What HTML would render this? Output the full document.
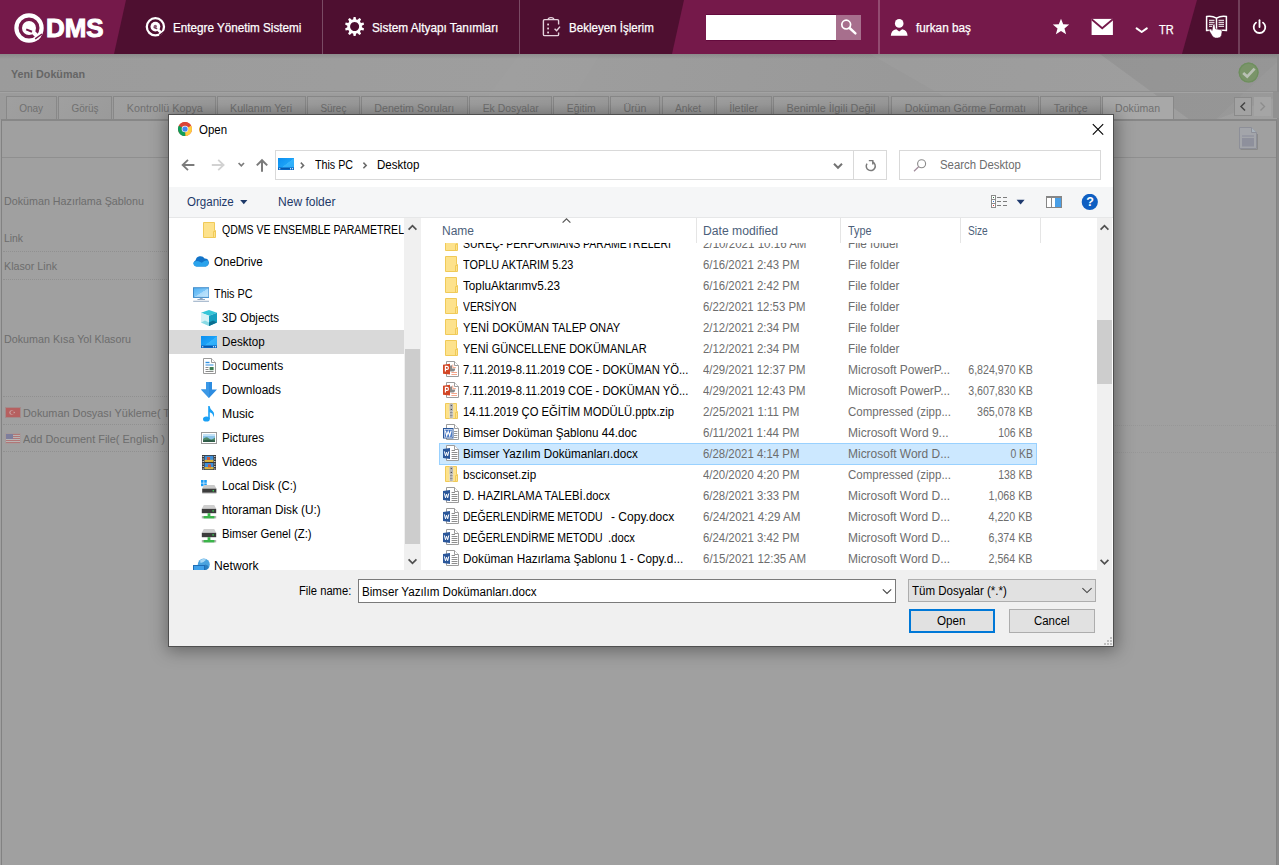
<!DOCTYPE html>
<html><head>
<meta charset="utf-8">
<title>QDMS</title>
<style>
*{box-sizing:border-box;margin:0;padding:0}
html,body{width:1279px;height:865px;overflow:hidden}
body{position:relative;background:#a0a0a0;font-family:"Liberation Sans",sans-serif;font-size:12px;color:#000}
.abs{position:absolute}
.t{position:absolute;white-space:nowrap;line-height:16px;height:16px;transform-origin:0 50%}
/* header */
#hdr{position:absolute;left:0;top:0;width:1279px;height:54px;background:#4e0f30;overflow:hidden}
#hdr .lt{position:absolute;top:0;height:54px;background:#75194a}
#hdr .sep{position:absolute;top:0;width:1px;height:54px;background:rgba(255,255,255,.25)}
#hdr .ht{position:absolute;color:#fff;font-size:12.5px;-webkit-text-stroke:.25px #fff;white-space:nowrap;line-height:16px;transform-origin:0 50%}
/* page */
.pgt{position:absolute;color:#6d6d6d;font-size:11px;margin-top:.4px;white-space:nowrap;line-height:14px;transform-origin:0 50%}
.tab{position:absolute;top:96px;height:23px;border:1px solid #888;border-bottom:none;background:linear-gradient(135deg,#a0a0a0,#9a9a9a);color:#707070;font-size:11px;line-height:22px;text-align:center;white-space:nowrap}
/* dialog */
#dlg{position:absolute;left:168px;top:114px;width:946px;height:533px;background:#fff;border:1px solid #4f4f4f;box-shadow:1px 2px 16px 2px rgba(0,0,0,.36)}
#dlg .t{font-size:12px}
</style>
</head>
<body>
<svg width="0" height="0" style="position:absolute">
<defs>
<linearGradient id="dg2" x1="0" y1="0" x2="1" y2="1"><stop offset="0" stop-color="#0c8ff0"></stop><stop offset=".5" stop-color="#1ba1f7"></stop><stop offset=".52" stop-color="#35b3fb"></stop><stop offset="1" stop-color="#29a9f8"></stop></linearGradient>
<linearGradient id="mg" x1="0" y1="0" x2="1" y2="1"><stop offset="0" stop-color="#4fb0f3"></stop><stop offset=".5" stop-color="#7cc6f8"></stop><stop offset=".52" stop-color="#a9dafb"></stop><stop offset="1" stop-color="#c6e7fc"></stop></linearGradient>
<symbol id="i-folder" viewBox="0 0 16 16"><path d="M2.5 .5 H13.5 V8.5 H14.5 V15.5 H2.5Z" fill="#fde28c" stroke="#f0ca58" stroke-width="1"></path><path d="M12.5 15 V9.5 H14" fill="none" stroke="#f0ca58" stroke-width="1"></path></symbol>
<symbol id="i-zip" viewBox="0 0 16 16"><path d="M2.5 .5 H13.5 V8.5 H14.5 V15.5 H2.5Z" fill="#fde28c" stroke="#f0ca58" stroke-width="1"></path><path d="M12.5 15 V9.5 H14" fill="none" stroke="#f0ca58" stroke-width="1"></path><rect x="6.4" y=".5" width="3.8" height="15" fill="#dcdcdc"></rect><rect x="7.1" y=".8" width="2.4" height="7.6" rx=".8" fill="#bdbdbd" stroke="#9a9a9a" stroke-width=".5"></rect><circle cx="8.3" cy="2.6" r=".6" fill="#333"></circle><circle cx="8.3" cy="6.4" r=".6" fill="#333"></circle><path d="M7 9.5h2.6M7 11h2.6M7 12.5h2.6M7 14h2.6" stroke="#6e6e6e" stroke-width=".7"></path></symbol>
<symbol id="i-ppt" viewBox="0 0 16 16"><path d="M3.5 .5 H11.5 L15.5 4.5 V15.5 H3.5Z" fill="#fff" stroke="#9c9c9c" stroke-width="1"></path><path d="M11.5 .5 V4.5 H15.5" fill="#fff" stroke="#9c9c9c" stroke-width="1"></path><path d="M9 4.2 V7.4 H12.2 A3.2 3.2 0 1 1 9 4.2Z" fill="#8a8a8a"></path><path d="M9.8 3.6 V6.6 H12.8" fill="none" stroke="#f4a58a" stroke-width="1"></path><rect x="8.4" y="11" width="5.6" height="1" fill="#f4a58a"></rect><rect x="8.4" y="13" width="5.6" height="1" fill="#f4a58a"></rect><path d="M0 3.8 L7 2.8 V13.6 L0 12.8Z" fill="#d24625"></path><path d="M2.4 10.6 V5.4 H4 Q5.4 5.4 5.4 6.9 Q5.4 8.4 4 8.4 H2.4" fill="none" stroke="#fff" stroke-width="1.2"></path></symbol>
<symbol id="i-doc" viewBox="0 0 16 16"><path d="M3.5 .5 H11.5 L15.5 4.5 V15.5 H3.5Z" fill="#fff" stroke="#9c9c9c" stroke-width="1"></path><path d="M11.5 .5 V4.5 H15.5" fill="#fff" stroke="#9c9c9c" stroke-width="1"></path><path d="M11 7.5h3.4M11 9.5h3.4M11 11.5h3.4M11 13.5h3.4" stroke="#9a9a9a" stroke-width="1"></path><rect x=".5" y="4.5" width="9.5" height="9.5" fill="#fff" stroke="#2b579a" stroke-width="1"></rect><rect x="1.6" y="5.6" width="7.3" height="7.3" fill="#3f6fbf"></rect><path d="M2.4 6.6 L3.7 11.8 L5.2 7.6 L6.7 11.8 L8.1 6.6" fill="none" stroke="#fff" stroke-width="1.2"></path></symbol>
<symbol id="i-docx" viewBox="0 0 16 16"><path d="M3.5 .5 H11.5 L15.5 4.5 V15.5 H3.5Z" fill="#fff" stroke="#9c9c9c" stroke-width="1"></path><path d="M11.5 .5 V4.5 H15.5" fill="#fff" stroke="#9c9c9c" stroke-width="1"></path><path d="M8.6 5.5h3.4M8.6 7.5h5.8M8.6 9.5h5.8M8.6 11.5h5.8M8.6 13.5h5.8" stroke="#8e8e8e" stroke-width="1"></path><path d="M0 4 L7 3 V14 L0 13Z" fill="#2b579a"></path><path d="M1.4 6.4 L2.5 10.8 L3.6 7.2 L4.7 10.8 L5.8 6.4" fill="none" stroke="#fff" stroke-width="1"></path></symbol>
<symbol id="i-desk" viewBox="0 0 16 12"><rect width="16" height="12" fill="url(#dg2)"></rect><rect y="9.4" width="16" height="2.6" fill="#0867c4"></rect><rect x="1.2" y="10.2" width="1.1" height="1.1" fill="#f0f8ff"></rect><rect x="12" y="10.2" width="1.1" height="1.1" fill="#f0f8ff"></rect><rect x="14" y="10.2" width="1.1" height="1.1" fill="#f0f8ff"></rect><rect x="2.6" y="10.4" width="9" height=".6" fill="#0a4f9e"></rect></symbol>
<symbol id="i-cloud" viewBox="0 0 17 11"><path d="M3.6 10.6 A3.4 3.4 0 0 1 2.6 4.2 A4.9 4.9 0 0 1 11.6 2.6 A4.1 4.1 0 0 1 13 10.6Z" fill="#1173c8"></path><path d="M3.6 10.6 A3.4 3.4 0 0 1 .4 6.4 Q2.6 4.2 5.6 5.2 L8.8 6.8 Q11 4.4 14.4 4.2 A4.1 4.1 0 0 1 13 10.6Z" fill="#2aa3ec"></path></symbol>
<symbol id="i-pc" viewBox="0 0 17 15"><rect x=".5" y=".5" width="16" height="10" fill="url(#mg)" stroke="#3a87c8" stroke-width="1"></rect><rect x="7" y="11" width="3" height="1.6" fill="#8fa7c0"></rect><rect x="4.6" y="12.2" width="7.8" height="1" fill="#8fa7c0"></rect><rect x=".2" y="14" width="16.6" height="1" fill="#8fa7c0"></rect></symbol>
<symbol id="i-3d" viewBox="0 0 16 16"><path d="M8 0 L16 2.8 L8 5.8 L0 2.8Z" fill="#35c6d8"></path><path d="M0 2.8 L8 5.8 V16 L0 12.6Z" fill="#d5f2f6"></path><path d="M16 2.8 L8 5.8 V16 L16 12.6Z" fill="#169fc0"></path><path d="M0 12.6 L4 10.6 L8 12.4 V16Z" fill="#8adbe5"></path><path d="M16 12.6 L12 10.6 L8 12.4 V16Z" fill="#0b6f90"></path></symbol>
<symbol id="i-docs" viewBox="0 0 13 16"><path d="M.5 .5 H8.5 L12.5 4.5 V15.5 H.5Z" fill="#fff" stroke="#9a9a9a" stroke-width="1"></path><path d="M8.5 .5 V4.5 H12.5" fill="#fff" stroke="#9a9a9a" stroke-width="1"></path><path d="M2.5 4.5h4" stroke="#2f8ee0" stroke-width="1.4"></path><path d="M2.5 7h8" stroke="#2f8ee0" stroke-width="1"></path><path d="M2.5 9.5h3M2.5 11.5h3M2.5 13.5h8" stroke="#8a8a8a" stroke-width="1"></path><rect x="6.6" y="9" width="4" height="3.2" fill="#3d7d54"></rect></symbol>
<symbol id="i-down" viewBox="0 0 16 16"><path d="M5 0 H11 V7.4 H16 L8 16 L0 7.4 H5Z" fill="#2d8ce0"></path><path d="M5 0 H8 V16 L0 7.4 H5Z" fill="#3b98e6"></path></symbol>
<symbol id="i-music" viewBox="0 0 12 16"><ellipse cx="3.4" cy="13" rx="3.4" ry="2.6" fill="#1aa0f5"></ellipse><path d="M5.2 13 V0 H6.6 Q7 3 9.6 5 Q12.4 7.6 10 11.4 Q10.8 7.6 6.8 6.2 V13Z" fill="#1aa0f5"></path></symbol>
<symbol id="i-pics" viewBox="0 0 16 12"><rect x=".5" y=".5" width="15" height="11" fill="#fff" stroke="#9a9a9a" stroke-width="1"></rect><rect x="2" y="2" width="12" height="8" fill="#8cc4ea"></rect><path d="M2 7 Q5 4 8 6.4 T14 5.6 V10 H2Z" fill="#4f8a6a"></path><path d="M2 8.6 Q6 7 14 8.4 V10 H2Z" fill="#2e5c47"></path><rect x="2" y="2" width="12" height="2" fill="#c3e2f6"></rect></symbol>
<symbol id="i-vid" viewBox="0 0 14 15"><rect width="14" height="15" fill="#3a3a3a"></rect><rect x="2.6" y=".8" width="8.8" height="6.2" fill="#3f8fd8"></rect><rect x="2.6" y="8" width="8.8" height="6.2" fill="#3f8fd8"></rect><rect x="2.6" y="4.8" width="8.8" height="2.2" fill="#d9b23c"></rect><rect x="2.6" y="12" width="8.8" height="2.2" fill="#d9b23c"></rect><rect x="5" y="2" width="3" height="3" fill="#c85a3c"></rect><rect x="6" y="9.4" width="3" height="3" fill="#c85a3c"></rect><path d="M.6 1.5h1.2M.6 4h1.2M.6 6.5h1.2M.6 9h1.2M.6 11.5h1.2M.6 14h1.2M12.2 1.5h1.2M12.2 4h1.2M12.2 6.5h1.2M12.2 9h1.2M12.2 11.5h1.2M12.2 14h1.2" stroke="#e8e8e8" stroke-width="1.2"></path></symbol>
<symbol id="i-cdrv" viewBox="0 0 16 14"><rect x="0" y="0" width="2.6" height="2.8" fill="#1a9cf5"></rect><rect x="3.2" y="0" width="2.6" height="2.8" fill="#1a9cf5"></rect><rect x="0" y="3.4" width="2.6" height="2.8" fill="#1a9cf5"></rect><rect x="3.2" y="3.4" width="2.6" height="2.8" fill="#1a9cf5"></rect><path d="M3 5 H13.4 L15.4 8.6 H1.2Z" fill="#c9c9c9"></path><rect x="1.2" y="8.6" width="14.2" height="4.2" fill="#3c3c3c"></rect><rect x="1.2" y="12.6" width="14.2" height=".8" fill="#9a9a9a"></rect><rect x="11.6" y="10" width="1.4" height="1.4" fill="#39d353"></rect></symbol>
<symbol id="i-ndrv" viewBox="0 0 16 14"><path d="M2.8 0 H13.2 L15.2 3.8 H.8Z" fill="#cfcfcf"></path><rect x=".8" y="3.8" width="14.4" height="4.4" fill="#3c3c3c"></rect><rect x="11.4" y="5.2" width="1.4" height="1.4" fill="#39d353"></rect><rect x="6.6" y="8.2" width="2.8" height="3" fill="#3bb54a"></rect><rect x=".8" y="11" width="14.4" height="2.4" fill="#b4b4b4"></rect><rect x="2.6" y="11" width="10.8" height="2.4" fill="#3bb54a"></rect></symbol>
<symbol id="i-net" viewBox="0 0 17 13"><circle cx="10.8" cy="6.4" r="6" fill="#4aa3df"></circle><path d="M7 2.4 Q10 0 13.4 1.6 Q11 4.6 7.6 5Z" fill="#a8d8f5"></path><path d="M12 6.4 Q16 7 15.6 10 Q13 12.6 10 12.2Z" fill="#2b7fc0"></path><rect x=".5" y="7.5" width="11" height="6" fill="#3ea0ea" stroke="#1f6db5" stroke-width="1"></rect></symbol>
</defs>
</svg>


<!-- ===== HEADER ===== -->
<div id="hdr">
  <div class="lt" style="left:0;width:126px;clip-path:polygon(0 0,126px 0,114px 54px,0 54px)"></div>
  <div class="lt" style="left:672px;width:526px;clip-path:polygon(12px 0,525px 0,510px 54px,0 54px)"></div>
  <div class="sep" style="left:322px"></div>
  <div class="sep" style="left:519px"></div>
  <div class="sep" style="left:878px;width:2px;background:rgba(255,255,255,.22)"></div>
  <div class="sep" style="left:1238px;width:2px;background:rgba(255,255,255,.2)"></div>
  <svg class="abs" style="left:0;top:0" width="1279" height="54" viewBox="0 0 1279 54">
  <!-- QDMS logo -->
  <circle cx="29" cy="28" r="12.6" fill="none" stroke="#fff" stroke-width="4.2"></circle>
  <circle cx="29" cy="28" r="7" fill="#fff"></circle>
  <path d="M31.5 30.5 L39.5 38.5" stroke="#fff" stroke-width="4" fill="none"></path>
  <path d="M26.2 29.4 L32 31.8" stroke="#75194a" stroke-width="2.1" fill="none"></path>
  <path d="M35.2 38.8 L42 34" stroke="#75194a" stroke-width="1.5" fill="none"></path>
  <!-- Q icon -->
  <circle cx="155.4" cy="26.8" r="8.6" fill="none" stroke="#fff" stroke-width="2.3"></circle>
  <circle cx="155.4" cy="26.6" r="4.9" fill="#fff"></circle>
  <circle cx="155.3" cy="26.4" r="1.7" fill="#8a5a72"></circle>
  <path d="M153.6 27.6 L157.4 29" stroke="#6a3050" stroke-width="1.1" fill="none"></path>
  <path d="M157.4 29 L161.4 33.2" stroke="#fff" stroke-width="2.6" fill="none"></path>
  <path d="M159.2 35.4 L164 31.8" stroke="#4e0f30" stroke-width="1.2" fill="none"></path>
  <!-- gear -->
  <path fill="#fff" fill-rule="evenodd" d="M353.6 16.9 L355.6 16.9 L356.1 19.4 L357.6 19.8 L359.4 18.1 L361.1 19.3 L360.0 21.6 L360.9 22.9 L363.5 22.5 L364.1 24.5 L361.9 25.7 L361.9 27.3 L364.1 28.5 L363.5 30.5 L360.9 30.1 L360.0 31.4 L361.1 33.7 L359.4 34.9 L357.6 33.2 L356.1 33.6 L355.6 36.1 L353.6 36.1 L353.1 33.6 L351.6 33.2 L349.8 34.9 L348.1 33.7 L349.2 31.4 L348.3 30.1 L345.7 30.5 L345.1 28.5 L347.3 27.3 L347.3 25.7 L345.1 24.5 L345.7 22.5 L348.3 22.9 L349.2 21.6 L348.1 19.3 L349.8 18.1 L351.6 19.8 L353.1 19.4Z M354.6 22 a4.5 4.5 0 1 0 0.01 0Z"></path>
  <!-- clipboard -->
  <g fill="none" stroke="#e6d3dd" stroke-width="1.4">
    <path d="M558.6 24.5 V20.8 Q558.6 19.6 557.4 19.6 H544.6 Q543.4 19.6 543.4 20.8 V34.4 Q543.4 35.6 544.6 35.6 H557.4 Q558.6 35.6 558.6 34.4 V32.5"></path>
    <path d="M548.2 19.6 Q548.2 17.6 551 17.6 Q553.8 17.6 553.8 19.6"></path>
    <path d="M554.6 28.8 L556.6 30.8 L560 26.6"></path>
  </g>
  <g fill="#e6d3dd"><rect x="547.2" y="23.6" width="1.8" height="1.8"></rect><rect x="547.2" y="27.6" width="1.8" height="1.8"></rect><rect x="547.2" y="31.6" width="1.8" height="1.8"></rect></g>
  <!-- user -->
  <circle cx="899.2" cy="23.4" r="4.3" fill="#fff"></circle>
  <path fill="#fff" d="M890.8 35.8 Q891.2 30 896.2 29.2 L899.2 31.4 L902.2 29.2 Q907.2 30 907.6 35.8Z"></path>
  <!-- star -->
  <polygon fill="#fff" points="1061.0,18.7 1063.2,24.3 1069.2,24.6 1064.5,28.4 1066.1,34.3 1061.0,31.0 1055.9,34.3 1057.5,28.4 1052.8,24.6 1058.8,24.3"></polygon>
  <!-- mail -->
  <rect x="1091.6" y="18.9" width="21.3" height="16.1" fill="#fff"></rect>
  <path d="M1091.6 19.2 L1102.2 28.2 L1112.9 19.2" fill="none" stroke="#75194a" stroke-width="1.8"></path>
  <!-- chevron -->
  <path d="M1136.6 28.4 L1141.7 32 L1146.8 28.4" fill="none" stroke="#fff" stroke-width="2" stroke-linecap="round" stroke-linejoin="round"></path>
  <!-- book -->
  <g fill="none" stroke="#fff" stroke-width="1.5">
    <path d="M1216.5 18.2 Q1212 15.6 1206.6 16.6 V30.4 Q1212 29.6 1216.5 31.6 Q1221 29.6 1226.4 30.4 V16.6 Q1221 15.6 1216.5 18.2 V31"></path>
  </g>
  <g stroke="#fff" stroke-width="1" fill="none">
    <path d="M1209 20.3h5.5M1209 22.3h5.5M1209 24.3h5.5M1209 26.3h3M1218.5 20.3h5.5M1218.5 22.3h5.5M1218.5 24.3h5.5M1218.5 26.3h5.5"></path>
  </g>
  <path fill="#fff" stroke="#4e0f30" stroke-width=".5" d="M1212.9 24.6 Q1214.4 23.8 1214.9 25.4 L1215.5 28.8 L1220.8 29.8 Q1222.2 30.2 1222 32 L1221.4 35.4 Q1220.6 38 1217.6 38 H1215.4 Q1213.4 37.8 1212.2 35.8 L1209.2 30.8 Q1208.8 29.2 1210.4 29 L1212.2 30.6 Z"></path>
  <!-- power -->
  <path d="M1256 22.6 A5.8 5.8 0 1 0 1263 22.6" fill="none" stroke="#fff" stroke-width="1.8" stroke-linecap="round"></path>
  <path d="M1259.5 20.2 V27" stroke="#fff" stroke-width="1.8" stroke-linecap="round"></path>
</svg>
<div class="ht" style="left: 46.2px; top: 13px; font-size: 25.5px; font-weight: bold; line-height: 30px; -webkit-text-stroke: 1px rgb(255, 255, 255); transform: scaleX(1.0164);">DMS</div>
<div class="ht" style="left: 173px; top: 19.6px; transform: scaleX(0.9342);">Entegre Yönetim Sistemi</div>
<div class="ht" style="left: 371.8px; top: 19.6px; transform: scaleX(0.9443);">Sistem Altyapı Tanımları</div>
<div class="ht" style="left: 568.8px; top: 19.6px; transform: scaleX(0.9247);">Bekleyen İşlerim</div>
<div class="abs" style="left:706px;top:15px;width:130px;height:25px;background:#fff;box-shadow:0 -1px 0 #640a3d,0 1px 0 #640a3d"></div>
<div class="abs" style="left:836px;top:15px;width:25px;height:25px;background:#a76f8d"></div>
<svg class="abs" style="left:836px;top:15px" width="25" height="25" viewBox="836 15 25 25">
  <circle cx="846.2" cy="24.6" r="4.4" fill="none" stroke="#fff" stroke-width="1.7"></circle>
  <path d="M849.6 28 L855.4 33.4" stroke="#fff" stroke-width="2.4" stroke-linecap="round"></path>
</svg>
<div class="ht" style="left: 915.7px; top: 19.6px; transform: scaleX(0.9405);">furkan baş</div>
<div class="ht" style="left: 1159px; top: 21.6px; font-size: 12px; transform: scaleX(0.9187);">TR</div>

</div>

<!-- ===== PAGE (dimmed) ===== -->
<div id="page">
<div class="abs" style="left:0;top:54px;width:1279px;height:66px;background:linear-gradient(100deg,#9b9b9b 0%,#9e9e9e 40%,#999 70%,#9c9c9c 100%)"></div>
<svg class="abs" style="left:0;top:54px" width="1279" height="66" viewBox="0 54 1279 66"><polygon points="870,54 1100,54 1190,120 985,120" fill="rgba(255,255,255,.035)"></polygon><polygon points="1100,54 1279,54 1279,96 1215,120 1190,120" fill="rgba(0,0,0,.035)"></polygon><polygon points="1215,120 1279,60 1279,120" fill="rgba(255,255,255,.035)"></polygon><polygon points="470,120 520,54 600,54 560,120" fill="rgba(255,255,255,.02)"></polygon></svg>
<div class="abs" id="hdrshadow" style="left:0;top:54px;width:1279px;height:5px;background:linear-gradient(rgba(0,0,0,.10),rgba(0,0,0,0))"></div>
<div class="abs" style="left:0;top:91px;width:1279px;height:1px;background:#8f8f8f"></div><div class="abs" style="left:0;top:92px;width:1279px;height:1px;background:#a3a3a3"></div>
<div class="pgt" style="left: 11px; top: 65.2px; font-weight: bold; color: rgb(102, 102, 102); line-height: 16px; transform: scaleX(0.9763);">Yeni Doküman</div>
<div class="tab" style="left:6px;width:51px;"><span style="display: inline-block; transform-origin: 50% 50%; transform: scaleX(0.9127);">Onay</span></div>
<div class="tab" style="left:58px;width:54px;"><span style="display: inline-block; transform-origin: 50% 50%; transform: scaleX(0.9009);">Görüş</span></div>
<div class="tab" style="left:113px;width:103px;"><span style="display: inline-block; transform-origin: 50% 50%; transform: scaleX(0.9785);">Kontrollü Kopya</span></div>
<div class="tab" style="left:217px;width:89px;"><span style="display: inline-block; transform-origin: 50% 50%; transform: scaleX(0.9655);">Kullanım Yeri</span></div>
<div class="tab" style="left:307px;width:53px;"><span style="display: inline-block; transform-origin: 50% 50%; transform: scaleX(0.9043);">Süreç</span></div>
<div class="tab" style="left:361px;width:107px;"><span style="display: inline-block; transform-origin: 50% 50%; transform: scaleX(0.9691);">Denetim Soruları</span></div>
<div class="tab" style="left:469px;width:83px;"><span style="display: inline-block; transform-origin: 50% 50%; transform: scaleX(0.9444);">Ek Dosyalar</span></div>
<div class="tab" style="left:553px;width:56px;"><span style="display: inline-block; transform-origin: 50% 50%; transform: scaleX(0.9489);">Eğitim</span></div>
<div class="tab" style="left:610px;width:50px;"><span style="display: inline-block; transform-origin: 50% 50%; transform: scaleX(0.9646);">Ürün</span></div>
<div class="tab" style="left:662px;width:53px;"><span style="display: inline-block; transform-origin: 50% 50%; transform: scaleX(0.9239);">Anket</span></div>
<div class="tab" style="left:716px;width:56px;"><span style="display: inline-block; transform-origin: 50% 50%; transform: scaleX(0.9883);">İletiler</span></div>
<div class="tab" style="left:773px;width:116px;"><span style="display: inline-block; transform-origin: 50% 50%; transform: scaleX(0.9903);">Benimle İlgili Değil</span></div>
<div class="tab" style="left:891px;width:148px;"><span style="display: inline-block; transform-origin: 50% 50%; transform: scaleX(0.9703);">Doküman Görme Formatı</span></div>
<div class="tab" style="left:1040px;width:61px;"><span style="display: inline-block; transform-origin: 50% 50%; transform: scaleX(0.9586);">Tarihçe</span></div>
<div class="tab" style="left:1102px;width:72px;background:#a8a8a8;height:24px;"><span style="display: inline-block; transform-origin: 50% 50%; transform: scaleX(0.9559);">Doküman</span></div>
<div class="abs" style="left:1234px;top:97px;width:18px;height:19px;border:1px solid #8a8a8a;background:#a3a3a3"></div>
<div class="abs" style="left:1254px;top:97px;width:17px;height:19px;background:#a5a5a5"></div>
<svg class="abs" style="left:1234px;top:97px" width="38" height="19" viewBox="0 0 38 19"><path d="M11 5.5 L7 9.5 L11 13.5" fill="none" stroke="#444" stroke-width="1.5"></path><path d="M26.5 5.5 L30.5 9.5 L26.5 13.5" fill="none" stroke="#8c8c8c" stroke-width="1.3"></path></svg>
<div class="abs" style="left:1px;top:119px;width:1276px;height:746px;border:1px solid #828282;border-top:2px solid #878787;border-bottom:none;background:#a0a0a0"></div>
<div class="abs" style="left:1277px;top:54px;width:2px;height:811px;background:#8b8b8b"></div>
<div class="abs" style="left:1273px;top:92px;width:6px;height:26px;background:#919191"></div>
<div class="abs" style="left:2px;top:157px;width:1274px;height:1px;background:#8f8f8f"></div>
<div class="pgt" style="left: 4px; top: 194px; transform: scaleX(0.9743);">Doküman Hazırlama Şablonu</div>
<div class="pgt" style="left: 4px; top: 231px; transform: scaleX(0.9412);">Link</div>
<div class="pgt" style="left: 4px; top: 259px; transform: scaleX(0.9739);">Klasor Link</div>
<div class="pgt" style="left: 4px; top: 332px; transform: scaleX(0.975);">Dokuman Kısa Yol Klasoru</div>
<div class="pgt" style="left: 23px; top: 406px; transform: scaleX(0.9881);">Dokuman Dosyası Yükleme( T</div>
<div class="pgt" style="left: 23px; top: 432px; transform: scaleX(0.9926);">Add Document File( English )</div>
<div class="abs" style="left:5px;top:407px;width:16px;height:11px;background:#b66060;border:1px solid #a58a8a"></div>
<svg class="abs" style="left:5px;top:407px" width="16" height="11" viewBox="0 0 16 11"><circle cx="6.6" cy="5.5" r="2.3" fill="#c9a0a0"></circle><circle cx="7.3" cy="5.5" r="1.8" fill="#b66060"></circle><circle cx="9.3" cy="5.5" r=".8" fill="#c9a0a0"></circle></svg>
<div class="abs" style="left:5px;top:433px;width:16px;height:11px;background:repeating-linear-gradient(#b07777 0 1px,#b9b4b4 1px 2px);border:1px solid #a59a9a"></div>
<div class="abs" style="left:6px;top:434px;width:7px;height:5px;background:#7e7e9c"></div>
<svg class="abs" style="left:1237px;top:61px" width="24" height="24" viewBox="0 0 24 24"><circle cx="11.6" cy="11.6" r="10" fill="#7a9469"></circle><circle cx="11.6" cy="11.6" r="9.4" fill="none" stroke="#6e8f5e" stroke-width="1.2"></circle><path d="M6.2 12 L10.2 15.6 L17.6 7.6" fill="none" stroke="#b9c0b4" stroke-width="2.8"></path></svg>
<svg class="abs" style="left:1238px;top:126px" width="21" height="25" viewBox="0 0 21 25"><path d="M1.5 1.5 H13.5 L18.5 6.5 V22.5 H1.5Z" fill="#a3a5aa" stroke="#8d8f98" stroke-width="1"></path><path d="M13.5 1.5 V6.5 H18.5" fill="#a9b3bc" stroke="#8d8f98" stroke-width="1"></path><rect x="4" y="9" width="12" height="2" fill="#9698a2"></rect><rect x="4" y="12" width="12" height="8.5" fill="#8e909c"></rect><path d="M2.5 23.5 H19.5 V8" fill="none" stroke="#8a8a8a" stroke-width="1"></path></svg>
<div class="abs" style="left:3px;top:251px;width:170px;height:0;border-top:1px dotted #909090"></div>
<div class="abs" style="left:3px;top:279px;width:170px;height:0;border-top:1px dotted #909090"></div>
<div class="abs" style="left:3px;top:396px;width:170px;height:0;border-top:1px dotted #909090"></div>
<div class="abs" style="left:3px;top:424px;width:170px;height:0;border-top:1px dotted #909090"></div>
<div class="abs" style="left:3px;top:451px;width:170px;height:0;border-top:1px dotted #909090"></div>
<div class="abs" style="left:1110px;top:425px;width:166px;height:0;border-top:1px dotted #979797"></div>
<div class="abs" style="left:1110px;top:452px;width:166px;height:0;border-top:1px dotted #979797"></div>

</div>

<!-- ===== DIALOG ===== -->
<div id="dlg">
<div class="abs" style="left:-169px;top:-115px;width:1279px;height:865px">
<!-- title -->
<svg class="abs" style="left:177px;top:121px" width="16" height="16" viewBox="0 0 16 16">
  <circle cx="8" cy="8" r="7" fill="#db4437"></circle>
  <path d="M8 8 L14.06 4.5 A7 7 0 0 1 8.3 15 Z" fill="#ffcd40"></path>
  <path d="M8 8 L8.3 15 A7 7 0 0 1 1.94 4.5 Z" fill="#0f9d58"></path>
  <path d="M8 8 L1.94 4.5 A7 7 0 0 1 14.06 4.5 Z" fill="#db4437"></path>
  <circle cx="8" cy="8" r="3.3" fill="#f1f1f1"></circle>
  <circle cx="8" cy="8" r="2.6" fill="#4285f4"></circle>
</svg>
<div class="t" style="left: 198.5px; top: 121.8px; transform: scaleX(0.9537);">Open</div>
<svg class="abs" style="left:1090px;top:121px" width="16" height="16" viewBox="1090 121 16 16"><path d="M1092.8 124.2 L1103.2 134.6 M1103.2 124.2 L1092.8 134.6" stroke="#000" stroke-width="1.1" fill="none"></path></svg>
<!-- nav arrows -->
<svg class="abs" style="left:176px;top:155px" width="96" height="22" viewBox="176 155 96 22">
  <path d="M194.4 165 H183 M188 159.8 L182.6 165 L188 170.2" fill="none" stroke="#7b7b7b" stroke-width="1.8"></path>
  <path d="M211.8 165 H223.2 M218.2 159.8 L223.6 165 L218.2 170.2" fill="none" stroke="#d2d2d2" stroke-width="1.8"></path>
  <path d="M238.6 163 L241.3 165.8 L244 163" fill="none" stroke="#7b7b7b" stroke-width="1.7"></path>
  <path d="M262 171.8 V160.4 M256.8 165.4 L262 160.2 L267.2 165.4" fill="none" stroke="#7b7b7b" stroke-width="2"></path>
</svg>
<!-- address box -->
<div class="abs" style="left:275px;top:150px;width:612px;height:30px;border:1px solid #d9d9d9;background:#fff"></div>
<div class="abs" style="left:853px;top:150px;width:1px;height:30px;background:#d9d9d9"></div>
<svg class="abs" style="left:278px;top:158px" width="16" height="12" viewBox="0 0 16 12">
  <defs><linearGradient id="dg" x1="0" y1="0" x2="1" y2="1"><stop offset="0" stop-color="#0c8ff0"></stop><stop offset=".5" stop-color="#1ba1f7"></stop><stop offset=".52" stop-color="#35b3fb"></stop><stop offset="1" stop-color="#29a9f8"></stop></linearGradient></defs>
  <rect x="0" y="0" width="16" height="12" fill="url(#dg)"></rect>
  <rect x="0" y="9.4" width="16" height="2.6" fill="#0867c4"></rect>
  <rect x="1.2" y="10.2" width="1.1" height="1.1" fill="#f0f8ff"></rect><rect x="12" y="10.2" width="1.1" height="1.1" fill="#f0f8ff"></rect><rect x="14" y="10.2" width="1.1" height="1.1" fill="#f0f8ff"></rect><rect x="2.6" y="10.4" width="9" height=".6" fill="#0a4f9e"></rect>
</svg>
<svg class="abs" style="left:298px;top:160px" width="80" height="12" viewBox="298 160 80 12">
  <path d="M300.8 162.6 L303.6 165.4 L300.8 168.2" fill="none" stroke="#6a6a6a" stroke-width="1.5"></path>
  <path d="M363.4 162.6 L366.2 165.4 L363.4 168.2" fill="none" stroke="#6a6a6a" stroke-width="1.5"></path>
</svg>
<div class="t" style="left: 315.4px; top: 156.8px; transform: scaleX(0.8902);">This PC</div>
<div class="t" style="left: 377.4px; top: 156.8px; transform: scaleX(0.9607);">Desktop</div>
<svg class="abs" style="left:830px;top:158px" width="52" height="16" viewBox="830 158 52 16">
  <path d="M834 163.8 L838 167.8 L842 163.8" fill="none" stroke="#737373" stroke-width="2"></path>
  <path d="M872.6 162 A4.5 4.5 0 1 1 867 163.6" fill="none" stroke="#7a7a7a" stroke-width="1.5"></path>
  <path d="M868.8 160.6 H872.8 V164.6" fill="none" stroke="#7a7a7a" stroke-width="1.4"></path>
</svg>
<!-- search box -->
<div class="abs" style="left:899px;top:150px;width:202px;height:30px;border:1px solid #d9d9d9;background:#fff"></div>
<svg class="abs" style="left:912px;top:158px" width="16" height="15" viewBox="912 158 16 15"><circle cx="921.6" cy="163.8" r="4" fill="none" stroke="#8a8a8a" stroke-width="1.1"></circle><path d="M918.6 166.8 L914 171.2" stroke="#a08a9a" stroke-width="1.2"></path></svg>
<div class="t" style="left: 940.1px; top: 157px; color: rgb(109, 109, 109); transform: scaleX(0.9474);">Search Desktop</div>
<!-- toolbar -->
<div class="abs" style="left:169px;top:187px;width:944px;height:31px;background:#f5f6f7;border-bottom:1px solid #e6e7e8"></div>
<div class="t" style="left: 187.3px; top: 193.8px; color: rgb(30, 57, 104); transform: scaleX(0.9609);">Organize</div>
<div class="t" style="left: 278.4px; top: 193.8px; color: rgb(30, 57, 104); transform: scaleX(1.0025);">New folder</div>
<svg class="abs" style="left:238px;top:194px" width="12" height="14" viewBox="238 194 12 14"><path d="M240.2 200 H247.4 L243.8 204.2Z" fill="#1e3968"></path></svg>
<svg class="abs" style="left:990px;top:194px" width="112" height="16" viewBox="990 194 112 16">
  <g fill="#fff" stroke="#8b8b8b" stroke-width="1"><rect x="991.5" y="195.5" width="4" height="4"></rect><rect x="991.5" y="199.5" width="4" height="4"></rect><rect x="991.5" y="203.5" width="4" height="4"></rect></g>
  <rect x="993" y="197" width="1" height="1" fill="#3a7a4a"></rect><rect x="993" y="201" width="1" height="1" fill="#3a78d8"></rect><rect x="993" y="205" width="1" height="1" fill="#d13438"></rect>
  <path d="M997 197.5h4M1003 197.5h4M997 201.5h4M1003 201.5h4M997 205.5h4M1003 205.5h4" stroke="#7c7c7c" stroke-width="1.2"></path>
  <path d="M1016.6 199.8 H1024.6 L1020.6 204.4Z" fill="#1e3a6e"></path>
  <rect x="1046.5" y="196.5" width="15" height="11" fill="#fff" stroke="#868686" stroke-width="1"></rect>
  <rect x="1046" y="196" width="16" height="2" fill="#868686"></rect>
  <rect x="1051" y="197" width="1" height="10" fill="#868686"></rect>
  <rect x="1055" y="198" width="6" height="9" fill="#4a9fe6"></rect>
  <circle cx="1089.8" cy="201.9" r="8.1" fill="#0f5fc2"></circle>
</svg>
<div class="t" style="left:1086px;top:193.6px;color:#fff;font-weight:bold;font-size:12.5px;width:8px;text-align:center">?</div>
<div class="abs" style="left:169px;top:330px;width:235px;height:24px;background:#d9d9d9"></div>
<div class="abs" style="left:404px;top:218px;width:17px;height:352px;background:#f0f0f0"></div>
<div class="abs" style="left:405px;top:349px;width:15px;height:195px;background:#cdcdcd"></div>
<svg class="abs" style="left:404px;top:218px" width="17" height="352" viewBox="0 0 17 352"><path d="M4.6 11.6 L8.5 7.6 L12.4 11.6" fill="none" stroke="#505050" stroke-width="1.7"></path><path d="M4.6 341.4 L8.5 345.4 L12.4 341.4" fill="none" stroke="#505050" stroke-width="1.7"></path></svg>
<div class="abs" style="left:169px;top:218px;width:235px;height:352px;overflow:hidden"><div class="abs" style="left:-169px;top:-218px;width:1279px;height:865px">
<svg class="abs" style="left:200.6px;top:222.0px" width="16" height="16"><use href="#i-folder"></use></svg>
<div class="t" style="left: 222px; top: 221.84px; transform: scaleX(0.8756);">QDMS VE ENSEMBLE PARAMETRELERİ</div>
<svg class="abs" style="left:192.6px;top:256.4px" width="17" height="11"><use href="#i-cloud"></use></svg>
<div class="t" style="left: 214.4px; top: 253.64px; transform: scaleX(0.9608);">OneDrive</div>
<svg class="abs" style="left:192.6px;top:287.0px" width="16.4" height="15"><use href="#i-pc"></use></svg>
<div class="t" style="left: 214.4px; top: 285.64px; transform: scaleX(0.9042);">This PC</div>
<svg class="abs" style="left:201.0px;top:310.0px" width="16" height="16"><use href="#i-3d"></use></svg>
<div class="t" style="left: 222px; top: 309.84px; transform: scaleX(0.9619);">3D Objects</div>
<svg class="abs" style="left:201.0px;top:336.0px" width="16" height="12"><use href="#i-desk"></use></svg>
<div class="t" style="left: 222px; top: 333.84px; transform: scaleX(0.9698);">Desktop</div>
<svg class="abs" style="left:202.6px;top:358.0px" width="13" height="16"><use href="#i-docs"></use></svg>
<div class="t" style="left: 222px; top: 357.84px; transform: scaleX(1.0082);">Documents</div>
<svg class="abs" style="left:201.0px;top:382.0px" width="16" height="16"><use href="#i-down"></use></svg>
<div class="t" style="left: 222px; top: 381.84px; transform: scaleX(0.992);">Downloads</div>
<svg class="abs" style="left:203.0px;top:406.0px" width="12" height="16"><use href="#i-music"></use></svg>
<div class="t" style="left: 222px; top: 405.84px; transform: scaleX(1.0177);">Music</div>
<svg class="abs" style="left:201.0px;top:432.0px" width="16" height="12"><use href="#i-pics"></use></svg>
<div class="t" style="left: 222px; top: 429.84px; transform: scaleX(0.971);">Pictures</div>
<svg class="abs" style="left:202.0px;top:455.0px" width="14" height="15"><use href="#i-vid"></use></svg>
<div class="t" style="left: 222px; top: 453.84px; transform: scaleX(0.9621);">Videos</div>
<svg class="abs" style="left:201.0px;top:480.0px" width="16" height="14"><use href="#i-cdrv"></use></svg>
<div class="t" style="left: 222px; top: 477.84px; transform: scaleX(0.9481);">Local Disk (C:)</div>
<svg class="abs" style="left:201.0px;top:505.0px" width="16" height="14"><use href="#i-ndrv"></use></svg>
<div class="t" style="left: 222px; top: 501.84px; transform: scaleX(0.9793);">htoraman Disk (U:)</div>
<svg class="abs" style="left:201.0px;top:529.0px" width="16" height="14"><use href="#i-ndrv"></use></svg>
<div class="t" style="left: 222px; top: 525.84px; transform: scaleX(0.9463);">Bimser Genel (Z:)</div>
<svg class="abs" style="left:192.6px;top:558.0px" width="17" height="13"><use href="#i-net"></use></svg>
<div class="t" style="left: 214.4px; top: 557.64px; transform: scaleX(1.011);">Network</div>
</div></div>
<div class="abs" style="left:696px;top:218px;width:1px;height:25px;background:#e5e5e5"></div>
<div class="abs" style="left:840px;top:218px;width:1px;height:25px;background:#e5e5e5"></div>
<div class="abs" style="left:960px;top:218px;width:1px;height:25px;background:#e5e5e5"></div>
<div class="abs" style="left:1040px;top:218px;width:1px;height:25px;background:#e5e5e5"></div>
<div class="t" style="left: 442.3px; top: 223.24px; color: rgb(76, 96, 122); transform: scaleX(0.9995);">Name</div>
<div class="t" style="left: 703.3px; top: 223.24px; color: rgb(76, 96, 122); transform: scaleX(1.0129);">Date modified</div>
<div class="t" style="left: 847.7px; top: 223.24px; color: rgb(76, 96, 122); transform: scaleX(0.8995);">Type</div>
<div class="t" style="left: 967.6px; top: 223.24px; color: rgb(76, 96, 122); transform: scaleX(0.8439);">Size</div>
<svg class="abs" style="left:561px;top:217px" width="11" height="7" viewBox="0 0 11 7"><path d="M1.6 5.6 L5.5 1.8 L9.4 5.6" fill="none" stroke="#5a5a5a" stroke-width="1.3"></path></svg>
<div class="abs" style="left:1097px;top:218px;width:15px;height:352px;background:#f0f0f0"></div>
<div class="abs" style="left:1097px;top:320px;width:15px;height:64px;background:#cdcdcd"></div>
<svg class="abs" style="left:1096px;top:218px" width="16" height="352" viewBox="0 0 16 352"><path d="M4.6 11.6 L8.5 7.6 L12.4 11.6" fill="none" stroke="#505050" stroke-width="1.7"></path><path d="M4.6 341.8 L8.5 345.8 L12.4 341.8" fill="none" stroke="#505050" stroke-width="1.7"></path></svg>
<div class="abs" style="left:439px;top:443px;width:598px;height:22px;background:#cce8ff;border:1px solid #99d1ff"></div>
<div class="abs" style="left:422px;top:243px;width:674px;height:327px;overflow:hidden"><div class="abs" style="left:-422px;top:-243px;width:1279px;height:865px">
<svg class="abs" style="left:443.0px;top:235.0px" width="16" height="16"><use href="#i-folder"></use></svg>
<div class="t" style="left: 463.4px; top: 235.84px; transform: scaleX(0.8746);">SÜREÇ- PERFORMANS PARAMETRELERİ</div>
<div class="t" style="left: 703.3px; top: 235.84px; color: rgb(109, 109, 109); transform: scaleX(0.9635);">2/10/2021 10:16 AM</div>
<div class="t" style="left: 847.5px; top: 235.84px; color: rgb(109, 109, 109); transform: scaleX(0.9756);">File folder</div>
<svg class="abs" style="left:443.0px;top:256.0px" width="16" height="16"><use href="#i-folder"></use></svg>
<div class="t" style="left: 463.4px; top: 256.84px; transform: scaleX(0.9078);">TOPLU AKTARIM 5.23</div>
<div class="t" style="left: 703.3px; top: 256.84px; color: rgb(109, 109, 109); transform: scaleX(0.9505);">6/16/2021 2:43 PM</div>
<div class="t" style="left: 847.5px; top: 256.84px; color: rgb(109, 109, 109); transform: scaleX(0.9756);">File folder</div>
<svg class="abs" style="left:443.0px;top:277.0px" width="16" height="16"><use href="#i-folder"></use></svg>
<div class="t" style="left: 463.4px; top: 277.84px; transform: scaleX(0.9759);">TopluAktarımv5.23</div>
<div class="t" style="left: 703.3px; top: 277.84px; color: rgb(109, 109, 109); transform: scaleX(0.9505);">6/16/2021 2:42 PM</div>
<div class="t" style="left: 847.5px; top: 277.84px; color: rgb(109, 109, 109); transform: scaleX(0.9756);">File folder</div>
<svg class="abs" style="left:443.0px;top:298.0px" width="16" height="16"><use href="#i-folder"></use></svg>
<div class="t" style="left: 463.4px; top: 298.84px; transform: scaleX(0.8627);">VERSİYON</div>
<div class="t" style="left: 703.3px; top: 298.84px; color: rgb(109, 109, 109); transform: scaleX(0.9483);">6/22/2021 12:53 PM</div>
<div class="t" style="left: 847.5px; top: 298.84px; color: rgb(109, 109, 109); transform: scaleX(0.9756);">File folder</div>
<svg class="abs" style="left:443.0px;top:319.0px" width="16" height="16"><use href="#i-folder"></use></svg>
<div class="t" style="left: 463.4px; top: 319.84px; transform: scaleX(0.9293);">YENİ DOKÜMAN TALEP ONAY</div>
<div class="t" style="left: 703.3px; top: 319.84px; color: rgb(109, 109, 109); transform: scaleX(0.9505);">2/12/2021 2:34 PM</div>
<div class="t" style="left: 847.5px; top: 319.84px; color: rgb(109, 109, 109); transform: scaleX(0.9756);">File folder</div>
<svg class="abs" style="left:443.0px;top:340.0px" width="16" height="16"><use href="#i-folder"></use></svg>
<div class="t" style="left: 463.4px; top: 340.84px; transform: scaleX(0.9147);">YENİ GÜNCELLENE DOKÜMANLAR</div>
<div class="t" style="left: 703.3px; top: 340.84px; color: rgb(109, 109, 109); transform: scaleX(0.9505);">2/12/2021 2:34 PM</div>
<div class="t" style="left: 847.5px; top: 340.84px; color: rgb(109, 109, 109); transform: scaleX(0.9756);">File folder</div>
<svg class="abs" style="left:443.0px;top:361.0px" width="16" height="16"><use href="#i-ppt"></use></svg>
<div class="t" style="left: 463.4px; top: 361.84px; transform: scaleX(0.9357);">7.11.2019-8.11.2019 COE - DOKÜMAN YÖ...</div>
<div class="t" style="left: 703.3px; top: 361.84px; color: rgb(109, 109, 109); transform: scaleX(0.9483);">4/29/2021 12:37 PM</div>
<div class="t" style="left: 847.5px; top: 361.84px; color: rgb(109, 109, 109); transform: scaleX(0.9972);">Microsoft PowerP...</div>
<div class="t" style="right: 246.4px; top: 361.84px; color: rgb(109, 109, 109); transform: scaleX(0.8868); transform-origin: 100% 50%;">6,824,970 KB</div>
<svg class="abs" style="left:443.0px;top:382.0px" width="16" height="16"><use href="#i-ppt"></use></svg>
<div class="t" style="left: 463.4px; top: 382.84px; transform: scaleX(0.9357);">7.11.2019-8.11.2019 COE - DOKÜMAN YÖ...</div>
<div class="t" style="left: 703.3px; top: 382.84px; color: rgb(109, 109, 109); transform: scaleX(0.9483);">4/29/2021 12:43 PM</div>
<div class="t" style="left: 847.5px; top: 382.84px; color: rgb(109, 109, 109); transform: scaleX(0.9972);">Microsoft PowerP...</div>
<div class="t" style="right: 246.4px; top: 382.84px; color: rgb(109, 109, 109); transform: scaleX(0.8868); transform-origin: 100% 50%;">3,607,830 KB</div>
<svg class="abs" style="left:443.0px;top:403.0px" width="16" height="16"><use href="#i-zip"></use></svg>
<div class="t" style="left: 463.4px; top: 403.84px; transform: scaleX(0.9365);">14.11.2019 ÇO EĞİTİM MODÜLÜ.pptx.zip</div>
<div class="t" style="left: 703.3px; top: 403.84px; color: rgb(109, 109, 109); transform: scaleX(0.9589);">2/25/2021 1:11 PM</div>
<div class="t" style="left: 847.5px; top: 403.84px; color: rgb(109, 109, 109); transform: scaleX(0.9593);">Compressed (zipp...</div>
<div class="t" style="right: 246.4px; top: 403.84px; color: rgb(109, 109, 109); transform: scaleX(0.8881); transform-origin: 100% 50%;">365,078 KB</div>
<svg class="abs" style="left:443.0px;top:424.0px" width="16" height="16"><use href="#i-doc"></use></svg>
<div class="t" style="left: 463.4px; top: 424.84px; transform: scaleX(0.9728);">Bimser Doküman Şablonu 44.doc</div>
<div class="t" style="left: 703.3px; top: 424.84px; color: rgb(109, 109, 109); transform: scaleX(0.9589);">6/11/2021 1:44 PM</div>
<div class="t" style="left: 847.5px; top: 424.84px; color: rgb(109, 109, 109); transform: scaleX(1.0012);">Microsoft Word 9...</div>
<div class="t" style="right: 246.4px; top: 424.84px; color: rgb(109, 109, 109); transform: scaleX(0.8686); transform-origin: 100% 50%;">106 KB</div>
<svg class="abs" style="left:443.0px;top:445.0px" width="16" height="16"><use href="#i-docx"></use></svg>
<div class="t" style="left: 463.4px; top: 445.84px; transform: scaleX(0.9737);">Bimser Yazılım Dokümanları.docx</div>
<div class="t" style="left: 703.3px; top: 445.84px; color: rgb(109, 109, 109); transform: scaleX(0.9505);">6/28/2021 4:14 PM</div>
<div class="t" style="left: 847.5px; top: 445.84px; color: rgb(109, 109, 109); transform: scaleX(0.9974);">Microsoft Word D...</div>
<div class="t" style="right: 246.4px; top: 445.84px; color: rgb(109, 109, 109); transform: scaleX(0.8687); transform-origin: 100% 50%;">0 KB</div>
<svg class="abs" style="left:443.0px;top:466.0px" width="16" height="16"><use href="#i-zip"></use></svg>
<div class="t" style="left: 463.4px; top: 466.84px; transform: scaleX(0.9711);">bsciconset.zip</div>
<div class="t" style="left: 703.3px; top: 466.84px; color: rgb(109, 109, 109); transform: scaleX(0.9505);">4/20/2020 4:20 PM</div>
<div class="t" style="left: 847.5px; top: 466.84px; color: rgb(109, 109, 109); transform: scaleX(0.9593);">Compressed (zipp...</div>
<div class="t" style="right: 246.4px; top: 466.84px; color: rgb(109, 109, 109); transform: scaleX(0.8686); transform-origin: 100% 50%;">138 KB</div>
<svg class="abs" style="left:443.0px;top:487.0px" width="16" height="16"><use href="#i-docx"></use></svg>
<div class="t" style="left: 463.4px; top: 487.84px; transform: scaleX(0.9434);">D. HAZIRLAMA TALEBİ.docx</div>
<div class="t" style="left: 703.3px; top: 487.84px; color: rgb(109, 109, 109); transform: scaleX(0.9505);">6/28/2021 3:33 PM</div>
<div class="t" style="left: 847.5px; top: 487.84px; color: rgb(109, 109, 109); transform: scaleX(0.9974);">Microsoft Word D...</div>
<div class="t" style="right: 246.4px; top: 487.84px; color: rgb(109, 109, 109); transform: scaleX(0.8871); transform-origin: 100% 50%;">1,068 KB</div>
<svg class="abs" style="left:443.0px;top:508.0px" width="16" height="16"><use href="#i-docx"></use></svg>
<div class="t" style="left: 463.4px; top: 508.84px; transform: scaleX(0.8736);">DEĞERLENDİRME METODU</div>
<div class="t" style="left: 610.6px; top: 508.84px; transform: scaleX(1.0025);">- Copy.docx</div>
<div class="t" style="left: 703.3px; top: 508.84px; color: rgb(109, 109, 109); transform: scaleX(0.9667);">6/24/2021 4:29 AM</div>
<div class="t" style="left: 847.5px; top: 508.84px; color: rgb(109, 109, 109); transform: scaleX(0.9974);">Microsoft Word D...</div>
<div class="t" style="right: 246.4px; top: 508.84px; color: rgb(109, 109, 109); transform: scaleX(0.8871); transform-origin: 100% 50%;">4,220 KB</div>
<svg class="abs" style="left:443.0px;top:529.0px" width="16" height="16"><use href="#i-docx"></use></svg>
<div class="t" style="left: 463.4px; top: 529.84px; transform: scaleX(0.8736);">DEĞERLENDİRME METODU</div>
<div class="t" style="left: 607.9px; top: 529.84px; transform: scaleX(0.9377);">.docx</div>
<div class="t" style="left: 703.3px; top: 529.84px; color: rgb(109, 109, 109); transform: scaleX(0.9505);">6/24/2021 3:42 PM</div>
<div class="t" style="left: 847.5px; top: 529.84px; color: rgb(109, 109, 109); transform: scaleX(0.9974);">Microsoft Word D...</div>
<div class="t" style="right: 246.4px; top: 529.84px; color: rgb(109, 109, 109); transform: scaleX(0.8871); transform-origin: 100% 50%;">6,374 KB</div>
<svg class="abs" style="left:443.0px;top:550.0px" width="16" height="16"><use href="#i-docx"></use></svg>
<div class="t" style="left: 463.4px; top: 550.84px; transform: scaleX(0.9806);">Doküman Hazırlama Şablonu 1 - Copy.d...</div>
<div class="t" style="left: 703.3px; top: 550.84px; color: rgb(109, 109, 109); transform: scaleX(0.9598);">6/15/2021 12:35 AM</div>
<div class="t" style="left: 847.5px; top: 550.84px; color: rgb(109, 109, 109); transform: scaleX(0.9974);">Microsoft Word D...</div>
<div class="t" style="right: 246.4px; top: 550.84px; color: rgb(109, 109, 109); transform: scaleX(0.8871); transform-origin: 100% 50%;">2,564 KB</div>
</div></div>
<div class="abs" style="left:169px;top:570px;width:944px;height:76px;background:#f0f0f0"></div>
<div class="t" style="left: 298.9px; top: 582.64px; transform: scaleX(0.9334);">File name:</div>
<div class="abs" style="left:358px;top:579px;width:538px;height:24px;border:1px solid #7a7a7a;background:#fff"></div>
<div class="t" style="left: 361.7px; top: 584.04px; transform: scaleX(0.972);">Bimser Yazılım Dokümanları.docx</div>
<svg class="abs" style="left:880px;top:585px" width="14" height="12" viewBox="0 0 14 12"><path d="M2.8 4.4 L7 8.4 L11.2 4.4" fill="none" stroke="#444" stroke-width="1.1"></path></svg>
<div class="abs" style="left:908px;top:579px;width:188px;height:23px;border:1px solid #adadad;background:#e1e1e1"></div>
<div class="t" style="left: 912.2px; top: 582.74px; transform: scaleX(0.9616);">Tüm Dosyalar (*.*)</div>
<svg class="abs" style="left:1080px;top:584px" width="14" height="12" viewBox="0 0 14 12"><path d="M2.4 4.2 L7 8.6 L11.6 4.2" fill="none" stroke="#444" stroke-width="1.1"></path></svg>
<div class="abs" style="left:909px;top:609px;width:86px;height:24px;border:2px solid #0078d7;background:#e1e1e1"></div>
<div class="t" style="left: 937.2px; top: 613.24px; transform: scaleX(0.9707);">Open</div>
<div class="abs" style="left:1009px;top:609px;width:86px;height:24px;border:1px solid #adadad;background:#e1e1e1"></div>
<div class="t" style="left: 1034px; top: 613.24px; transform: scaleX(0.9529);">Cancel</div>
<svg class="abs" style="left:1102px;top:635px" width="11" height="11" viewBox="0 0 11 11"><g fill="#bfbfbf"><rect x="8" y="2" width="2" height="2"></rect><rect x="5" y="5" width="2" height="2"></rect><rect x="8" y="5" width="2" height="2"></rect><rect x="2" y="8" width="2" height="2"></rect><rect x="5" y="8" width="2" height="2"></rect><rect x="8" y="8" width="2" height="2"></rect></g></svg>

</div>

</div>



</body></html>
